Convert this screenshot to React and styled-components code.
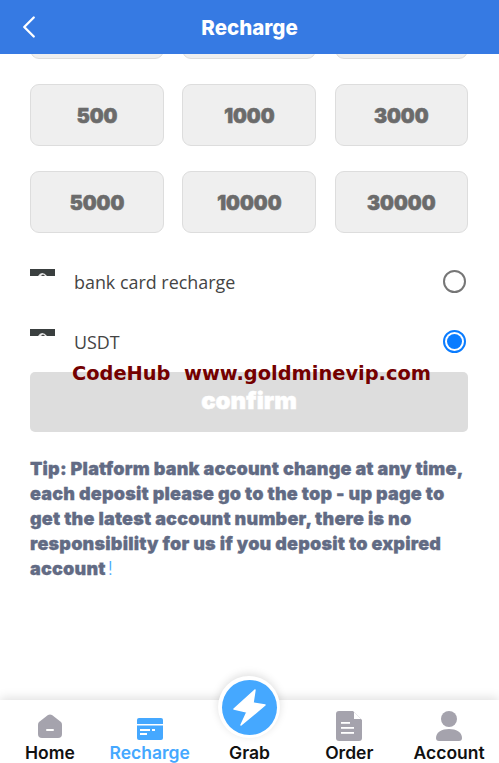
import React from "react";
import styled, { createGlobalStyle } from "styled-components";
import { ChevronLeft } from "lucide-react";

const Global = createGlobalStyle`
  html, body { margin: 0; padding: 0; background: #fff; }
  * { box-sizing: border-box; }
`;
const Page = styled.div`
  width: 499px; height: 763px; position: relative; overflow: hidden;
  display: flex; flex-direction: column; background: #fff;
  font-family: Inter, "Liberation Sans", sans-serif;
`;
const Header = styled.header`
  height: 54px; flex: none; background: #367ae3; color: #fff; position: relative; z-index: 2;
  display: flex; align-items: center; justify-content: center;
  font-size: 20.5px; font-weight: 800;
`;
const Back = styled.span`
  position: absolute; left: 10px; top: 8px; display: flex; color: #fff;
`;
const Body = styled.main`
  flex: 1; min-height: 0; overflow: hidden;
`;
const Amounts = styled.div`
  display: grid; grid-template-columns: 134px 134px 133px; column-gap: 18.4px; row-gap: 25px;
  margin: -57px 0 0 30px;
`;
const Amount = styled.div`
  height: 62px; border: 1px solid #ddd; border-radius: 9px; background: #efefef;
  display: flex; align-items: center; justify-content: center; padding-top: 1px;
  color: #6b6b6b; font-size: 19.5px; font-weight: 900; -webkit-text-stroke: .6px #6b6b6b;
`;
const Methods = styled.div`
  margin: 19px 31px 0 30px; display: flex; flex-direction: column;
`;
const Method = styled.div`
  height: 60px; display: flex; align-items: center; position: relative;
  font-family: "Open Sans", sans-serif; font-size: 17.900px; color: #444;
`;
const Logo = styled.svg`
  position: absolute; left: 0; top: 17px;
`;
const Label = styled.span`
  margin-left: 44px; flex: 1;
`;
const Radio = styled.span`
  width: 23px; height: 23px; border-radius: 50%; flex: none; margin: -1px 2px 0 0;
  border: 2px solid ${p => (p.$on ? "#0a7cff" : "#767676")};
  display: flex; align-items: center; justify-content: center;
  &::after {
    content: ""; width: 15px; height: 15px; border-radius: 50%;
    background: ${p => (p.$on ? "#0a7cff" : "transparent")};
  }
`;
const Confirm = styled.div`
  height: 60px; margin: 0 31px 0 30px; background: #ddd; border-radius: 5px;
  display: flex; align-items: center; justify-content: center;
  color: #fff; font-size: 24px; font-weight: 900; padding-bottom: 3px;
  -webkit-text-stroke: .5px #fff;
`;
const Watermark = styled.div`
  position: absolute; left: 72px; top: 361px; z-index: 3; white-space: pre;
  font-family: "DejaVu Sans", sans-serif; font-weight: 700; font-size: 19.400px;
  line-height: 26px; color: #740000;
`;
const Tip = styled.p`
  margin: 24px 25px 0 30px; color: #626b84; font-size: 18px; letter-spacing: .2px; line-height: 25px;
  font-weight: 900; -webkit-text-stroke: .3px #626b84;
`;
const Bang = styled.span`
  color: #45a8ff; font-weight: 300; -webkit-text-stroke: 0; margin-left: 2px;
`;
const Nav = styled.nav`
  height: 63px; flex: none; background: #fff; position: relative; z-index: 2;
  display: grid; grid-template-columns: repeat(5, 1fr);
  box-shadow: 0 -2px 10px rgba(0,0,0,.13);
`;
const NavItem = styled.div`
  display: flex; flex-direction: column; align-items: center; justify-content: flex-end;
  font-size: 17.500px; font-weight: 600; line-height: 20px;
  color: ${p => (p.$active ? "#45a8ff" : "#111")};
`;
const IconBox = styled.div`
  height: 30px; padding-top: ${p => p.$drop || 0}px; margin-bottom: 2px;
  display: flex; align-items: center; justify-content: center;
`;
const Fab = styled.div`
  position: absolute; left: 218px; top: -24px; width: 62px; height: 62px; border-radius: 50%;
  background: #fff; box-shadow: 0 -2px 8px rgba(0,0,0,.13);
  display: flex; align-items: center; justify-content: center;
`;
const FabInner = styled.div`
  width: 55px; height: 55px; border-radius: 50%; background: #45a8ff;
  display: flex; align-items: center; justify-content: center;
`;

const grey = "#a5a3ad";
const HomeIcon = () => (
  <svg width="26" height="25" viewBox="0 0 26 25"><path fill={grey} d="M11 1 L2 8Q1 9 1 10.500V20Q1 24 5 24H21Q25 24 25 20V10.500Q25 9 24 8L15 1Q13 -.2 11 1Z"/><rect x="9" y="15" width="8" height="2" rx="1" fill="#fff"/></svg>
);
const CardIcon = () => (
  <svg width="26" height="22" viewBox="0 0 26 22"><path fill="#45a8ff" d="M0 6V2Q0 0 2 0H24Q26 0 26 2V6Z"/><path fill="#45a8ff" d="M0 7.500H26V20Q26 22 24 22H2Q0 22 0 20Z"/><rect x="3" y="11" width="10" height="2" fill="#fff"/><rect x="3" y="15" width="7" height="2" fill="#fff"/><rect x="15" y="11" width="3" height="2" fill="#fff"/></svg>
);
const OrderIcon = () => (
  <svg width="26" height="30" viewBox="0 0 26 30"><path fill={grey} d="M3 0H17L26 9V27Q26 30 23 30H3Q0 30 0 27V3Q0 0 3 0Z"/><path fill="#fff" d="M18 1L25 8H18Z"/><rect x="5" y="11" width="9" height="1.800" fill="#fff"/><rect x="5" y="16" width="13" height="1.800" fill="#fff"/><rect x="5" y="21" width="13" height="1.800" fill="#fff"/></svg>
);
const UserIcon = () => (
  <svg width="26" height="30" viewBox="0 0 26 30"><circle cx="13" cy="8" r="8" fill={grey}/><path fill={grey} d="M0 27C0 21 6 18 13 18S26 21 26 27Q26 30 23 30H3Q0 30 0 27Z"/></svg>
);
const BoltIcon = () => (
  <svg width="33" height="37" viewBox="-1 -1 33 37"><path fill="#fff" stroke="#fff" strokeWidth="1.500" strokeLinejoin="round" d="M21 0L0 19L13 22L7 35L31 15L19 13Z"/></svg>
);
const BankLogo = () => (
  <Logo width="25" height="7" viewBox="0 0 25 7"><rect width="25" height="7" fill="#3a3f3f"/><path d="M8 7Q12 1 17 7Z" fill="#e8e8e8"/><path d="M11 7Q13 4 15 7Z" fill="#444"/></Logo>
);

const rows = ["", "", "", "500", "1000", "3000", "5000", "10000", "30000"];

export default function App() {
  return (
    <Page>
      <Global />
      <Header>
        <Back><ChevronLeft size={38} strokeWidth={1.500} /></Back>
        Recharge
      </Header>
      <Body>
        <Amounts>
          {rows.map((a, i) => <Amount key={i}>{a}</Amount>)}
        </Amounts>
        <Methods>
          <Method><BankLogo /><Label>bank card recharge</Label><Radio /></Method>
          <Method><BankLogo /><Label>USDT</Label><Radio $on /></Method>
        </Methods>
        <Confirm>confirm</Confirm>
        <Tip>Tip: Platform bank account change at any time, each deposit please go to the top - up page to get the latest account number, there is no responsibility for us if you deposit to expired account<Bang>!</Bang></Tip>
      </Body>
      <Watermark>CodeHub  www.goldminevip.com</Watermark>
      <Nav>
        <NavItem><IconBox><HomeIcon /></IconBox>Home</NavItem>
        <NavItem $active><IconBox $drop={5}><CardIcon /></IconBox>Recharge</NavItem>
        <NavItem>Grab</NavItem>
        <NavItem><IconBox><OrderIcon /></IconBox>Order</NavItem>
        <NavItem><IconBox><UserIcon /></IconBox>Account</NavItem>
        <Fab><FabInner><BoltIcon /></FabInner></Fab>
      </Nav>
    </Page>
  );
}
